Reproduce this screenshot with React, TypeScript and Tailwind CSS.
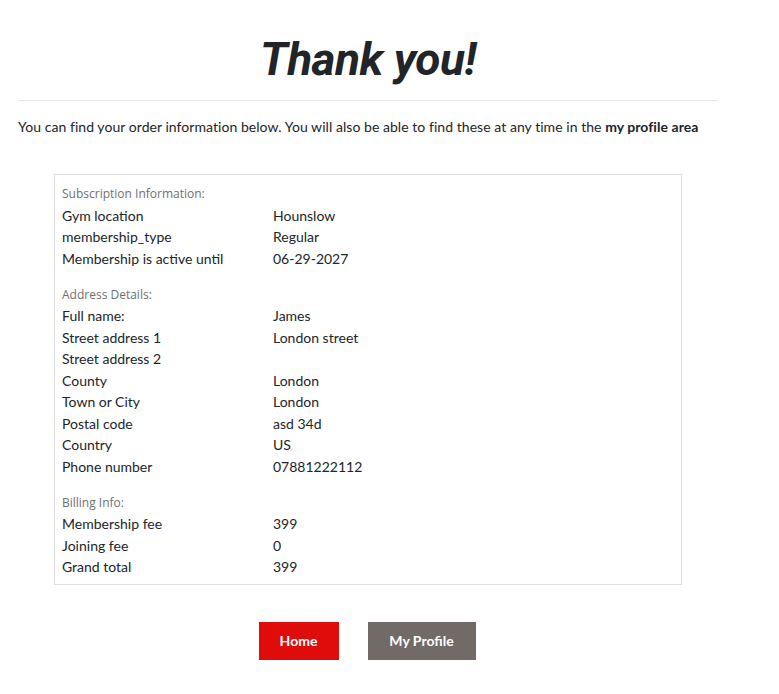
const subscription = [
  ['Gym location', 'Hounslow'],
  ['membership_type', 'Regular'],
  ['Membership is active until', '06-29-2027'],
];

const address = [
  ['Full name:', 'James'],
  ['Street address 1', 'London street'],
  ['Street address 2', ''],
  ['County', 'London'],
  ['Town or City', 'London'],
  ['Postal code', 'asd 34d'],
  ['Country', 'US'],
  ['Phone number', '07881222112'],
];

const billing = [
  ['Membership fee', '399'],
  ['Joining fee', '0'],
  ['Grand total', '399'],
];

function Section({ title, rows, first }: { title: string; rows: string[][]; first?: boolean }) {
  return (
    <div className={first ? '' : 'mt-[14.5px]'}>
      <p className="font-['Open_Sans',sans-serif] text-[12px] leading-[21.5px] text-[#6f6f6f]">{title}</p>
      {rows.map(([label, value]) => (
        <div key={label} className="grid grid-cols-[211px_1fr] leading-[21.5px]">
          <span>{label}</span>
          <span>{value}</span>
        </div>
      ))}
    </div>
  );
}

export default function App() {
  return (
    <div className="min-h-screen bg-white font-['Lato',sans-serif] text-[14px] text-[#212529]">
      <div className="ml-[18px] w-[700px] pt-[32px]">
        <h1 className="text-center font-['Roboto',sans-serif] text-[46px] font-bold italic leading-[54px] tracking-[-0.5px] text-[#212529]">
          Thank you!
        </h1>
        <hr className="mt-[14px] border-t border-[#e6e6e6]" />
        <p className="mt-[15px] leading-[21px] tracking-[0.05px]">
          You can find your order information below. You will also be able to find these at any time in the{' '}
          <span className="font-bold">my profile area</span>
        </p>
        <div className="mx-auto mt-[37px] w-[628px] border border-[#dedede] px-[7px] pt-[8px] pb-[6px]">
          <Section title="Subscription Information:" rows={subscription} first />
          <Section title="Address Details:" rows={address} />
          <Section title="Billing Info:" rows={billing} />
        </div>
        <div className="mt-[37px] flex justify-center gap-[29px] pr-[2px]">
          <button className="h-[38px] w-[80px] bg-[#e00b0b] font-bold text-white">Home</button>
          <button className="h-[38px] w-[108px] bg-[#716a67] font-bold text-white">My Profile</button>
        </div>
      </div>
    </div>
  );
}
